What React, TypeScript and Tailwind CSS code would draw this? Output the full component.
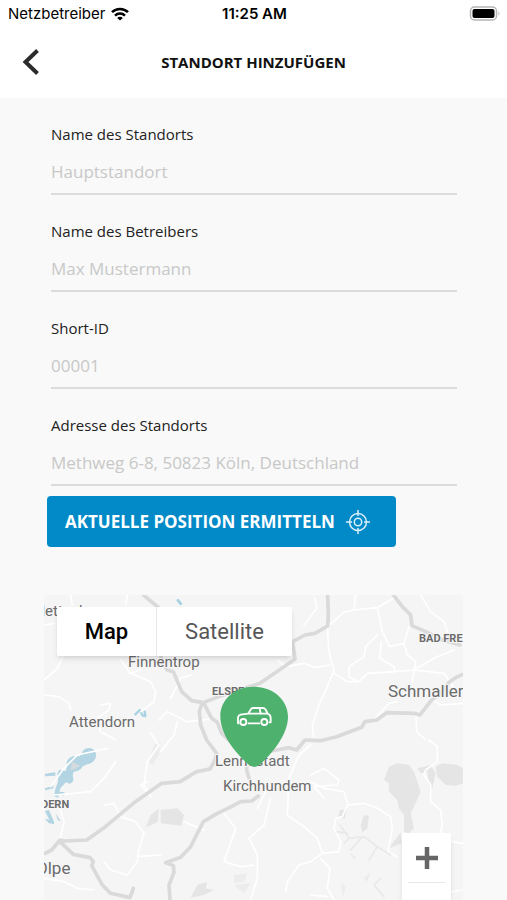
import { useState } from 'react';

const fields = [
  { id: 'name', label: 'Name des Standorts', placeholder: 'Hauptstandort' },
  { id: 'operator', label: 'Name des Betreibers', placeholder: 'Max Mustermann' },
  { id: 'shortId', label: 'Short-ID', placeholder: '00001' },
  { id: 'address', label: 'Adresse des Standorts', placeholder: 'Methweg 6-8, 50823 Köln, Deutschland' },
];

const mainRoads = [
  'M298 0L343 37L352 200L370 225L388 230L413 290L443 317L478 323L518 307L600 280L648 265L698 230L753 193L746 140L783 120L813 115L851 93L853 60L851 0',
  'M475 323L466 350L470 390L488 435L518 475L513 495L498 522L458 530L408 560L353 565L268 625L178 700L128 735L60 738L48 735L23 765L3 775',
  'M480 325L503 370L520 382L533 415L570 450',
  'M1048 0L1075 35L1100 60L1104 92L1150 112L1195 135L1248 150',
  'M1257 238L1235 248L1215 262L1195 290L1163 315L1128 360L1110 355L1028 353L998 375L963 380L953 397L878 425L830 437L783 435L758 465L735 458L698 465L640 475',
  'M50 742L88 778L138 788L148 800L143 812L175 870L200 895L258 908L268 880',
  'M643 603L623 618L590 620L568 632L520 655L478 680L440 755L410 787L365 803L388 812L390 832L375 870L378 915',
  'M608 505L608 525L615 550',
];

const minorRoads = [
  'M0 255L40 220L60 180L55 150',
  'M0 300L45 305L75 325L80 345',
  'M230 195L260 235L320 260L335 290L330 320L290 350',
  'M255 235L290 225L280 200',
  'M170 330L200 325L195 345L160 370L170 410L215 435',
  'M345 375L370 350L430 380L500 372',
  'M400 380L390 420L350 470',
  'M380 310L410 250L440 240',
  'M0 90L30 85',
  'M80 0L85 30M250 0L245 30',
  'M813 10L818 40L780 90M851 95L900 52L930 45L935 0M930 45L1000 38L1048 10M1000 38L1015 110L1037 155L1080 145L1095 95',
  'M1000 120L965 155L960 185L915 215L915 245L945 260M1012 140L1008 190L1050 215L1052 230L970 235L945 260L910 260L870 235',
  'M851 93L853 150L858 185L870 225L850 275L825 330L805 390L810 435M700 195L725 215L780 205L815 218L858 210',
  'M1052 230L1110 225L1170 190L1230 165M1080 145L1090 180L1115 200L1105 260',
  'M1130 0L1160 50L1200 80L1215 120',
  'M1110 225L1200 235L1230 280L1257 285M1160 310L1190 330L1257 325',
  'M1116 365L1118 410L1145 435M990 375L1035 325L1060 320',
  'M1155 435L1180 455L1180 500L1145 525L1140 540L1160 570L1160 620L1190 645L1195 690L1190 710L1225 740L1257 745',
  'M320 415L345 450L310 500L300 570L320 600M310 560L290 570L320 605',
  'M30 600L90 595L140 590L180 550L215 500',
  'M180 630L210 625L230 665L275 680L300 715L285 760L280 800L250 840L200 825L180 800',
  'M280 785L350 780M48 640L60 680L48 735M0 850L60 860L100 880L150 885',
  'M420 680L480 705M540 655L575 700L565 730L540 800L590 815L630 810M680 610L660 690L615 730L640 780L640 850L620 915',
  'M665 590L640 640M735 550L765 480L800 450M735 550L730 660L780 695L820 730L835 775L800 800L765 810L730 860L725 890',
  'M835 775L885 770L890 740L870 700L875 670L895 665L910 630L960 625L1000 640L1040 665L1045 700L1032 770L1060 785',
  'M800 540L840 520L885 555L880 570L810 575L840 610M800 560L840 580L900 590L912 628',
  'M830 790L858 820L850 880L870 915M800 900L850 905M1200 895L1257 885',
  'M20 575L60 520L100 480L190 460',
];

const woods = [
  'M1035 515L1060 505L1095 510L1110 530L1120 560L1130 590L1110 635L1100 655L1110 700L1095 715L1080 710L1080 660L1065 640L1060 615L1035 590L1035 565L1020 555Z',
  'M1175 515L1195 505L1240 510L1257 520L1257 565L1235 572L1205 570L1180 545Z',
  'M1120 520L1160 510L1175 535L1165 580L1155 570L1150 530L1130 535Z',
  'M350 645L400 640L420 660L412 692L350 685Z',
  'M305 698L320 660L345 640L342 680Z',
  'M888 645L908 642L902 672L882 665Z',
  'M960 660L975 662L970 700L955 712L950 690Z',
  'M1035 760L1070 712L1072 745Z',
  'M460 870L490 860L485 880L510 885L480 900L440 908Z',
];

const thinWoods = [
  'M315 500L330 450L350 440L345 480L325 510Z',
  'M570 840L610 835L600 860L570 865ZM570 870L620 865L600 895Z',
  'M915 770L935 785L930 795ZM890 860L905 875L898 905ZM960 850L980 830L970 860Z',
];

const places = [
  { name: 'Finnentrop', x: 84, y: 72, className: 'text-[15px]' },
  { name: 'Attendorn', x: 25, y: 132, className: 'text-[15px]' },
  { name: 'Lennestadt', x: 171, y: 171, className: 'text-[15px]' },
  { name: 'Kirchhundem', x: 179, y: 196, className: 'text-[15px]' },
  { name: 'Schmaller', x: 344, y: 102, className: 'text-[17px]' },
  { name: 'Plettenberg', x: -12, y: 21, className: 'text-[15px]' },
  { name: 'Olpe', x: -8, y: 279, className: 'text-[17px]' },
  { name: 'ELSPE', x: 168, y: 100, className: 'text-[11px] font-bold' },
  { name: 'BAD FRE', x: 375, y: 47, className: 'text-[11px] font-bold' },
  { name: 'DERN', x: -3, y: 213, className: 'text-[11px] font-bold' },
];

function StatusBar() {
  return (
    <div className="grid grid-cols-3 items-center h-7 pl-2 pr-1.5 font-['Inter',sans-serif] text-[15px] text-black">
      <div className="flex items-center gap-1.5">
        <span>Netzbetreiber</span>
        <svg className="w-[18px] h-[14px]" viewBox="0 0 18 14" fill="none" stroke="#000" strokeWidth="2.5">
          <path d="M1 5.2C5.4 0.9 12.6 0.9 17 5.2" />
          <path d="M4 8.6C6.8 5.9 11.2 5.9 14 8.6" />
          <path d="M9 13.6L6.2 10.9C7.8 9.5 10.2 9.5 11.8 10.9Z" fill="#000" stroke="none" />
        </svg>
      </div>
      <span className="text-center font-semibold">11:25 AM</span>
      <svg className="justify-self-end w-8 h-4" viewBox="0 0 32 16">
        <rect x="1.5" y="1" width="26" height="13" rx="4" fill="#fff" stroke="#b5b5b5" strokeWidth="1.5" />
        <rect x="3.5" y="3" width="22" height="9" rx="2" fill="#000" />
        <path d="M29.5 5Q31.5 7.500 29.5 10Z" fill="#b5b5b5" />
      </svg>
    </div>
  );
}

function MapDrawing() {
  return (
    <svg
      className="absolute inset-0 w-full h-full"
      viewBox="0 0 419 305"
      preserveAspectRatio="xMidYMin slice"
      role="img"
      aria-label="Karte"
    >
      <rect width="419" height="305" fill="#f5f5f5" />
      <g transform="scale(0.33333)" fill="none" strokeLinejoin="round" strokeLinecap="round">
        {woods.map((d) => (
          <path key={d} d={d} fill="#e5e5e5" />
        ))}
        {thinWoods.map((d) => (
          <path key={d} d={d} fill="#ececec" />
        ))}
        <g fill="#b3d5e3">
          <path d="M123 462C138 455 156 462 156 480C157 496 143 506 130 508L116 514C108 530 98 526 88 532L86 545C92 552 86 566 76 566L66 562L50 578L46 590L62 592L60 602L46 598L42 608L30 604L34 582L42 560L40 535L46 524L66 528L68 514C66 500 72 488 86 484L104 484C114 482 112 468 123 462Z" />
          <path d="M3 536L34 532V542L3 544ZM3 580L28 572V580L3 586ZM3 648L15 645L30 680L30 688L14 684L3 672L16 674ZM34 655L50 678L42 676Z" />
        </g>
        <path d="M84 500L108 512L94 522L80 526Z" fill="#d5dadd" />
        <path d="M274 358L287 345L296 362L304 363L302 350" stroke="#a9d3e2" strokeWidth="7" />
        <path d="M402 16L410 26" stroke="#a9d3e2" strokeWidth="9" />
        {minorRoads.map((d) => (
          <path key={d} d={d} stroke="#fff" strokeWidth="5" />
        ))}
        <path
          d="M888 690L915 730L960 725L1000 755L1040 780M915 730L900 745M955 725L920 765M1000 755L975 795M1010 850L990 870L1020 905M880 710L910 715"
          stroke="#e9e9e9"
          strokeWidth="5"
        />
        {mainRoads.map((d) => (
          <path key={d} d={d} stroke="#dadada" strokeWidth="11" />
        ))}
      </g>
      <g className="font-['Roboto',sans-serif]" fill="#6b6b6b" stroke="#f7f7f7" strokeWidth="2" paintOrder="stroke">
        {places.map((place) => (
          <text key={place.name} x={place.x} y={place.y} className={place.className}>
            {place.name}
          </text>
        ))}
      </g>
      <g transform="translate(166 85) scale(0.33333)" fill="none" stroke="#fff" strokeLinejoin="round">
        <path
          d="M132 20C192 20 234 62 234 110C234 162 190 216 152 252Q133 270 114 252C74 216 31 164 31 108C31 60 72 20 132 20Z"
          fill="#4eb26e"
          stroke="none"
        />
        <path
          d="M88 130H84V112Q85 106 92 104L114 101L124 86Q126 84 130 84H158Q164 84 167 89L173 101Q182 105 182 113V127H176M113 130H150M114 101H171M149 85L152 101"
          strokeWidth="5.5"
        />
        <circle cx="100" cy="126" r="9" strokeWidth="5.5" />
        <circle cx="163" cy="126" r="9" strokeWidth="5.5" />
      </g>
    </svg>
  );
}

function LocationMap() {
  const [mapType, setMapType] = useState('map');
  const [zoom, setZoom] = useState(11);

  return (
    <section className="relative flex-1 min-h-[305px] mt-12 mx-11 overflow-hidden font-['Roboto',sans-serif]">
      <MapDrawing />
      <div className="absolute top-3 left-[13px] flex h-[49px] bg-white rounded-xs shadow-md text-[22px]">
        <button
          type="button"
          onClick={() => setMapType('map')}
          className={`w-[100px] border-r border-gray-200 ${mapType === 'map' ? 'font-medium text-black' : 'text-[#565656]'}`}
        >
          Map
        </button>
        <button
          type="button"
          onClick={() => setMapType('satellite')}
          className={`w-[135px] ${mapType === 'satellite' ? 'font-medium text-black' : 'text-[#565656]'}`}
        >
          Satellite
        </button>
      </div>
      <div className="absolute bottom-0 right-3 w-[49px] h-[67px] bg-white rounded-t-xs shadow-md">
        <button
          type="button"
          onClick={() => setZoom(zoom + 1)}
          aria-label="Vergrößern"
          className="flex items-center justify-center w-full h-[49px]"
        >
          <svg className="w-[22px] h-[22px]" viewBox="0 0 22 22" fill="none" stroke="#666" strokeWidth="4.5">
            <path d="M11 0V22M0 11H22" />
          </svg>
        </button>
        <div className="mx-1.5 h-px bg-gray-200" />
      </div>
    </section>
  );
}

export default function App() {
  return (
    <div className="min-h-screen flex flex-col bg-[#f9f9f9] font-['Open_Sans',sans-serif]">
      <header className="h-[98px] bg-white">
        <StatusBar />
        <div className="grid grid-cols-[48px_1fr_48px] items-center h-[68px]">
          <button type="button" aria-label="Zurück" className="justify-self-end pr-2">
            <svg className="w-[18px] h-[26px]" viewBox="0 0 18 26" fill="none" stroke="#2b2b2b" strokeWidth="4">
              <path d="M15.500 1.500L3.500 13L15.500 24.500" />
            </svg>
          </button>
          <h1 className="text-center text-[15px] font-bold text-[#111]">STANDORT HINZUFÜGEN</h1>
        </div>
      </header>

      <form className="flex flex-col gap-[26px] pl-[51px] pr-[50px] pt-[26px]">
        {fields.map((field) => (
          <div key={field.id} className="flex flex-col">
            <label htmlFor={field.id} className="text-[15px] leading-5 text-[#222]">
              {field.label}
            </label>
            <input
              id={field.id}
              type="text"
              placeholder={field.placeholder}
              className="w-full h-[51px] pt-1.5 border-b-2 border-[#dcdcdc] bg-transparent text-[17px] text-[#222] placeholder:text-[#c8c8c8] outline-none"
            />
          </div>
        ))}
      </form>

      <button
        type="button"
        className="self-start flex items-center gap-2.5 h-[51px] mt-2.5 ml-[47px] pl-[18px] pr-[25px] rounded-sm bg-[#028ac8] text-white text-[17px] font-bold"
      >
        AKTUELLE POSITION ERMITTELN
        <svg className="w-[26px] h-[26px]" viewBox="0 0 26 26" fill="none" stroke="#d9f1fb" strokeWidth="1.5">
          <circle cx="13" cy="13" r="8.500" />
          <circle cx="13" cy="13" r="3.700" />
          <path d="M13 1V7M13 19V25M1 13H7M19 13H25" />
        </svg>
      </button>

      <LocationMap />
    </div>
  );
}
